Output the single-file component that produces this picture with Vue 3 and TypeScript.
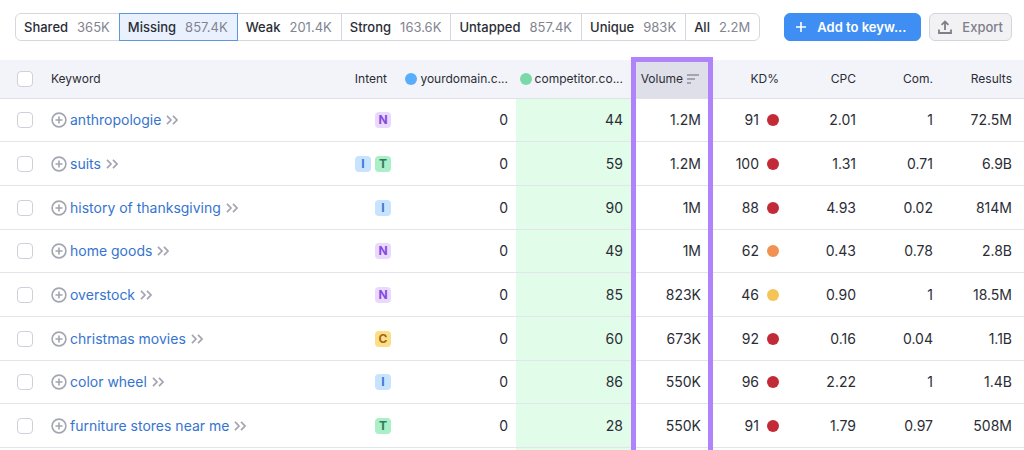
<script setup lang="ts">
import { ref } from 'vue'

type Intent = 'N' | 'I' | 'T' | 'C'

interface Row {
  keyword: string
  intents: Intent[]
  own: string
  competitor: string
  volume: string
  kd: number
  cpc: string
  com: string
  results: string
}

const tabs = [
  { name: 'Shared', count: '365K' },
  { name: 'Missing', count: '857.4K' },
  { name: 'Weak', count: '201.4K' },
  { name: 'Strong', count: '163.6K' },
  { name: 'Untapped', count: '857.4K' },
  { name: 'Unique', count: '983K' },
  { name: 'All', count: '2.2M' },
]
const active = ref('Missing')

const rows: Row[] = [
  { keyword: 'anthropologie', intents: ['N'], own: '0', competitor: '44', volume: '1.2M', kd: 91, cpc: '2.01', com: '1', results: '72.5M' },
  { keyword: 'suits', intents: ['I', 'T'], own: '0', competitor: '59', volume: '1.2M', kd: 100, cpc: '1.31', com: '0.71', results: '6.9B' },
  { keyword: 'history of thanksgiving', intents: ['I'], own: '0', competitor: '90', volume: '1M', kd: 88, cpc: '4.93', com: '0.02', results: '814M' },
  { keyword: 'home goods', intents: ['N'], own: '0', competitor: '49', volume: '1M', kd: 62, cpc: '0.43', com: '0.78', results: '2.8B' },
  { keyword: 'overstock', intents: ['N'], own: '0', competitor: '85', volume: '823K', kd: 46, cpc: '0.90', com: '1', results: '18.5M' },
  { keyword: 'christmas movies', intents: ['C'], own: '0', competitor: '60', volume: '673K', kd: 92, cpc: '0.16', com: '0.04', results: '1.1B' },
  { keyword: 'color wheel', intents: ['I'], own: '0', competitor: '86', volume: '550K', kd: 96, cpc: '2.22', com: '1', results: '1.4B' },
  { keyword: 'furniture stores near me', intents: ['T'], own: '0', competitor: '28', volume: '550K', kd: 91, cpc: '1.79', com: '0.97', results: '508M' },
]

function level(kd: number): string {
  if (kd >= 85) return 'very-hard'
  return kd >= 50 ? 'hard' : 'medium'
}
</script>

<template>
  <main class="page">
    <div class="toolbar">
      <div class="tabs">
        <button
          v-for="tab in tabs"
          :key="tab.name"
          type="button"
          class="tab"
          :class="{ active: tab.name === active }"
          :aria-pressed="tab.name === active"
          @click="active = tab.name"
        >
          <span>{{ tab.name }}</span>
          <span class="count">{{ tab.count }}</span>
        </button>
      </div>
      <div class="actions">
        <button type="button" class="action primary">
          <svg width="12" height="12" viewBox="0 0 12 12" aria-hidden="true">
            <path d="M6 1v10M1 6h10" fill="none" stroke="currentColor" stroke-width="1.6" />
          </svg>
          <span>Add to keyw...</span>
        </button>
        <button type="button" class="action secondary">
          <svg width="14" height="14" viewBox="0 0 14 14" aria-hidden="true">
            <path d="M1 9.5V13h12V9.5M7 10V2M3.6 4.8L7 1.4l3.4 3.4" fill="none" stroke="currentColor" stroke-width="1.8" />
          </svg>
          <span>Export</span>
        </button>
      </div>
    </div>

    <table class="grid">
      <colgroup>
        <col class="c-check" />
        <col />
        <col class="c-intent" />
        <col class="c-own" />
        <col class="c-competitor" />
        <col class="c-volume" />
        <col class="c-kd" />
        <col class="c-cpc" />
        <col class="c-com" />
        <col class="c-results" />
      </colgroup>
      <thead>
        <tr>
          <th class="check"><input type="checkbox" aria-label="Select all keywords" /></th>
          <th class="left">Keyword</th>
          <th class="wide">Intent</th>
          <th class="near"><span class="domain"><i class="dot own"></i>yourdomain.c...</span></th>
          <th class="near"><span class="domain"><i class="dot rival"></i>competitor.co...</span></th>
          <th class="volume">
            <span class="sort">Volume
              <svg width="12" height="10" viewBox="0 0 12 10" aria-hidden="true">
                <path d="M0 1h12M0 5h8M0 9h4" fill="none" stroke="#8f919c" stroke-width="1.6" />
              </svg>
            </span>
          </th>
          <th class="wide">KD%</th>
          <th class="wide">CPC</th>
          <th class="wide">Com.</th>
          <th class="wide">Results</th>
        </tr>
      </thead>
      <tbody>
        <tr v-for="row in rows" :key="row.keyword" class="row">
          <td class="check"><input type="checkbox" :aria-label="'Select ' + row.keyword" /></td>
          <td class="left">
            <span class="keyword">
              <button type="button" class="add" :aria-label="'Add ' + row.keyword">
                <svg width="16" height="16" viewBox="0 0 16 16" aria-hidden="true">
                  <circle cx="8" cy="8" r="6.9" fill="none" stroke="currentColor" stroke-width="1.6" />
                  <path d="M8 4.5v7M4.5 8h7" fill="none" stroke="currentColor" stroke-width="1.6" />
                </svg>
              </button>
              <a href="#">{{ row.keyword }}</a>
              <svg width="12" height="10" viewBox="0 0 12 10" class="more" aria-hidden="true">
                <path d="M1 0.8L5 5L1 9.2M7 0.8L11 5L7 9.2" fill="none" stroke="currentColor" stroke-width="1.7" />
              </svg>
            </span>
          </td>
          <td class="near">
            <span class="badges">
              <span v-for="i in row.intents" :key="i" class="badge" :class="'b-' + i">{{ i }}</span>
            </span>
          </td>
          <td class="near">{{ row.own }}</td>
          <td class="near competitor">{{ row.competitor }}</td>
          <td class="wide">{{ row.volume }}</td>
          <td class="wide"><span class="kd">{{ row.kd }}<i class="dot" :class="level(row.kd)"></i></span></td>
          <td class="wide">{{ row.cpc }}</td>
          <td class="wide">{{ row.com }}</td>
          <td class="wide">{{ row.results }}</td>
        </tr>
        <tr class="tail" aria-hidden="true">
          <td colspan="4"></td>
          <td class="competitor"></td>
          <td colspan="5"></td>
        </tr>
      </tbody>
    </table>
  </main>
</template>

<style>
body {
  margin: 0;
  background: #fff;
}
</style>

<style scoped>
.page {
  min-height: 100vh;
  overflow: hidden;
  background: #fff;
  color: #2b2d36;
  font-family: Inter, "Liberation Sans", sans-serif;
  font-size: 14px;
  line-height: 20px;
}

button {
  font: inherit;
  cursor: pointer;
}

.toolbar {
  display: flex;
  justify-content: space-between;
  padding: 13px 12px 19px 15px;
  font-size: 13px;
}

.tabs,
.actions {
  display: flex;
}

.actions {
  gap: 8px;
}

.tab {
  display: flex;
  align-items: center;
  gap: 9px;
  height: 28px;
  margin: 0 0 0 -1px;
  padding: 0 9px 0 8px;
  border: 1px solid #d6d7df;
  background: #fff;
  color: #2b2d36;
  font-weight: 500;
  white-space: nowrap;
}

.tab:first-child {
  margin-left: 0;
  border-radius: 6px 0 0 6px;
}

.tab:last-child {
  border-radius: 0 6px 6px 0;
}

.tab.active {
  position: relative;
  border-color: #5f96e0;
  background: #e9f1fe;
}

.count {
  color: #82848f;
  font-weight: 400;
}

.action {
  display: flex;
  align-items: center;
  height: 28px;
  border-radius: 6px;
  font-weight: 500;
  white-space: nowrap;
}

.primary {
  gap: 10px;
  padding: 0 14px 0 10px;
  border: 1px solid #3f8ef3;
  background: #3f8ef3;
  color: #fff;
  font-weight: 600;
}

.secondary {
  gap: 10px;
  padding: 0 8px;
  border: 1px solid #d3d4dc;
  background: #f2f2f5;
  color: #7d7f8a;
}

.grid {
  width: 100%;
  table-layout: fixed;
  border-collapse: separate;
  border-spacing: 0;
}

.c-check { width: 51px; }
.c-intent { width: 79px; }
.c-own { width: 117px; }
.c-competitor { width: 115px; }
.c-volume { width: 82px; }
.c-kd { width: 78px; }
.c-cpc { width: 77px; }
.c-com { width: 77px; }
.c-results { width: 79px; }

th,
td {
  box-sizing: border-box;
  padding: 0;
  text-align: right;
  vertical-align: middle;
  white-space: nowrap;
}

th {
  height: 39px;
  border-bottom: 1px solid #e0e1e9;
  background: #f3f4f9;
  font-size: 12px;
  font-weight: 400;
}

.row td {
  height: 44px;
  border-bottom: 1px solid #e4e5eb;
}

.row:nth-child(3n + 1) td {
  height: 43px;
}

.tail td {
  height: 2px;
}

.near { padding-right: 8px; }
.wide { padding-right: 12px; }
.left { text-align: left; }

.check {
  padding-left: 17px;
  text-align: left;
}

.check input {
  display: block;
  box-sizing: border-box;
  appearance: none;
  width: 16px;
  height: 16px;
  margin: 0;
  border: 1px solid #cfd0da;
  border-radius: 4px;
  background: #fff;
}

.check input:checked {
  background: #3f8ef3;
}

td.competitor {
  background: #e1fce9;
}

.volume {
  position: relative;
  padding-right: 14px;
  background: #dfdfe9;
}

.volume::after {
  content: "";
  position: absolute;
  top: -3px;
  left: 0;
  right: 0;
  height: 100vh;
  border: 5px solid #b183fa;
  pointer-events: none;
}

.sort,
.domain,
.kd,
.keyword,
.badges {
  display: flex;
  align-items: center;
  justify-content: flex-end;
}

.keyword { justify-content: flex-start; }
.sort { gap: 4px; }
.domain { gap: 3px; }
.kd { gap: 8px; }
.badges { gap: 4px; }

.dot {
  width: 12px;
  height: 12px;
  border-radius: 50%;
}

.own { background: #58aefb; }
.rival { background: #7bd9a9; }
.very-hard { background: #c22a38; }
.hard { background: #f19253; }
.medium { background: #f5c456; }

.keyword a {
  margin: 0 5px 0 3px;
  color: #3574cf;
  text-decoration: none;
}

.add {
  display: flex;
  padding: 0;
  border: 0;
  background: none;
  color: #a3a5b0;
}

.more {
  color: #a3a5b0;
}

.badge {
  width: 16px;
  height: 16px;
  border-radius: 4px;
  font-size: 12px;
  font-weight: 700;
  line-height: 16px;
  text-align: center;
}

.b-N { background: #e9d9fd; color: #8649e1; }
.b-I { background: #c8e3fd; color: #3c78cf; }
.b-T { background: #a9efc8; color: #33785c; }
.b-C { background: #fbdf86; color: #a3621b; }
</style>
